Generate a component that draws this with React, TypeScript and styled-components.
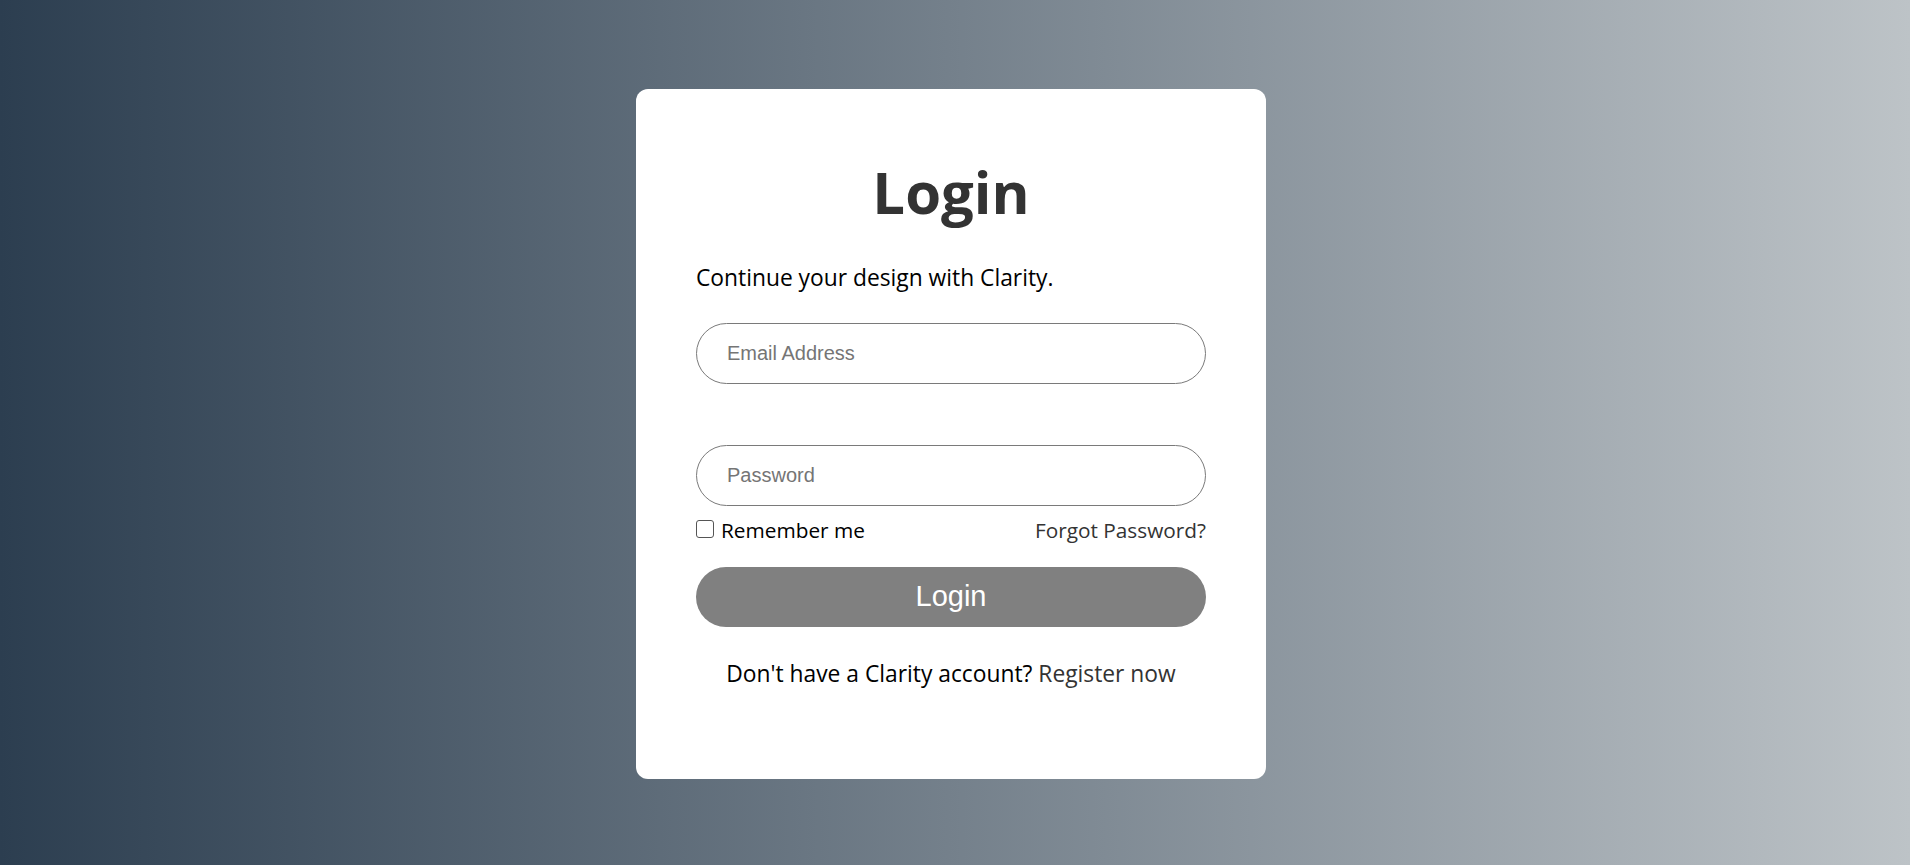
import React from "react";
import styled, { createGlobalStyle } from "styled-components";

const GlobalStyle = createGlobalStyle`
  html, body { margin: 0; padding: 0; height: 100%; }
  body { font-family: "Open Sans", "Noto Sans", sans-serif; }
  #root { height: 100%; }
`;

const Page = styled.div`
  width: 100%;
  height: 865px;
  background: linear-gradient(to right, #2c3e50, #bdc3c7);
  display: flex;
  align-items: center;
  justify-content: center;
  padding-right: 8px;
  box-sizing: border-box;
`;

const Card = styled.form`
  width: 630px;
  height: 690px;
  box-sizing: border-box;
  background: #fff;
  border-radius: 12px;
  padding: 69px 60px 0;
  display: flex;
  flex-direction: column;
  margin-top: 2px;
`;

const Title = styled.h1`
  margin: 0;
  font-family: "Open Sans", sans-serif;
  font-weight: 700;
  font-size: 58px;
  line-height: 67px;
  color: #333;
  text-align: center;
`;

const Subtitle = styled.p`
  margin: 38px 0 0;
  font-size: 22.8px;
  line-height: 30px;
  color: #000;
`;

const Input = styled.input<{ $gap: number }>`
  display: block;
  width: 100%;
  height: 61px;
  box-sizing: border-box;
  margin-top: ${(p) => p.$gap}px;
  border: 1px solid #7a7a7a;
  border-radius: 31px;
  padding: 0 30px;
  font-family: "Liberation Sans", Arial, sans-serif;
  font-size: 20px;
  color: #000;
  background: #fff;
  outline: none;
  &::placeholder { color: #757575; }
`;

const OptionsRow = styled.div`
  display: flex;
  justify-content: space-between;
  align-items: center;
  margin-top: 10px;
  font-size: 20.8px;
  line-height: 28px;
`;

const CheckLabel = styled.label`
  display: flex;
  align-items: center;
  gap: 7px;
  color: #000;
`;

const Check = styled.input`
  appearance: none;
  margin: 0;
  width: 18px;
  height: 18px;
  border: 1.4px solid #555;
  border-radius: 3px;
  background: #fff;
  box-sizing: border-box;
  position: relative;
  top: -1px;
`;

const TextLink = styled.a`
  color: #333;
  text-decoration: none;
`;

const Button = styled.button`
  margin-top: 23px;
  width: 100%;
  height: 60px;
  border: none;
  border-radius: 30px;
  background: #808080;
  color: #fff;
  font-family: "Liberation Sans", Arial, sans-serif;
  font-size: 29px;
  cursor: pointer;
`;

const Footer = styled.p`
  margin: 32px 0 0;
  text-align: center;
  font-size: 22.8px;
  line-height: 30px;
  color: #000;
`;

export default function App() {
  return (
    <>
      <GlobalStyle />
      <Page>
        <Card onSubmit={(e) => e.preventDefault()}>
          <Title>Login</Title>
          <Subtitle>Continue your design with Clarity.</Subtitle>
          <Input $gap={30} type="email" placeholder="Email Address" />
          <Input $gap={61} type="password" placeholder="Password" />
          <OptionsRow>
            <CheckLabel>
              <Check type="checkbox" />
              Remember me
            </CheckLabel>
            <TextLink href="#">Forgot Password?</TextLink>
          </OptionsRow>
          <Button type="submit">Login</Button>
          <Footer>
            Don't have a Clarity account? <TextLink href="#">Register now</TextLink>
          </Footer>
        </Card>
      </Page>
    </>
  );
}
